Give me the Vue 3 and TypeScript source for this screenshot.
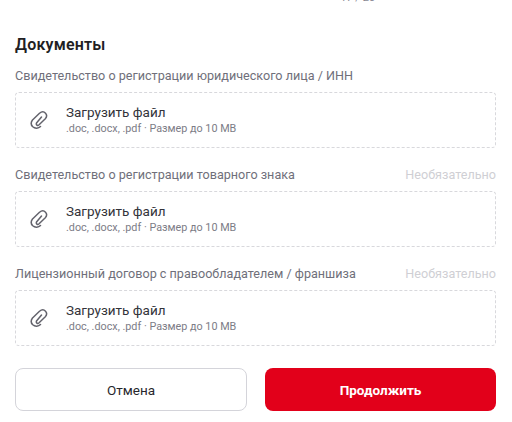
<script setup lang="ts">
interface Doc { label: string; optional: boolean }
const docs: Doc[] = [
  { label: 'Свидетельство о регистрации юридического лица / ИНН', optional: false },
  { label: 'Свидетельство о регистрации товарного знака', optional: true },
  { label: 'Лицензионный договор с правообладателем / франшиза', optional: true },
]
</script>

<template>
  <div class="page">
    <div class="counter">17 / 25</div>
    <h2 class="title">Документы</h2>
    <div class="docs">
      <div v-for="d in docs" :key="d.label" class="field">
        <div class="label-row">
          <span class="label">{{ d.label }}</span>
          <span v-if="d.optional" class="optional">Необязательно</span>
        </div>
        <div class="drop">
          <svg class="clip" width="20" height="20" viewBox="0 0 20 20" fill="none">
            <path d="M11.500 16.500C9.500 18.500 6 18.800 3.800 16.800C1.800 14.800 2 12 3.500 10L10.500 3.300C12.500 1.600 15 1.600 16.500 3.200C18 4.800 17.800 7 16.300 8.800L9.800 15C8.500 16 6.800 14.800 7.500 13L12.500 7" stroke="#63636c" stroke-width="1.500" stroke-linecap="round" stroke-linejoin="round"/>
          </svg>
          <div class="drop-text">
            <div class="drop-title">Загрузить файл</div>
            <div class="drop-hint">.doc, .docx, .pdf · Размер до 10 MB</div>
          </div>
        </div>
      </div>
    </div>
    <div class="actions">
      <button class="btn cancel" type="button">Отмена</button>
      <button class="btn next" type="button">Продолжить</button>
    </div>
  </div>
</template>

<style>
html, body { margin: 0; background: #fff; overflow: hidden; }
</style>

<style scoped>
.page {
  width: 512px;
  height: 422px;
  box-sizing: border-box;
  padding: 0 16px 0 15px;
  font-family: Roboto, sans-serif;
  color: #1f1f24;
  overflow: hidden;
}
.counter {
  height: 4px;
  line-height: 4px;
  margin-top: -4px;
  text-align: right;
  padding-right: 121px;
  font-size: 11px;
  color: #8a8a94;
}
.title {
  margin: 33px 0 0;
  font-size: 16px;
  line-height: 24px;
  font-weight: 600;
  letter-spacing: 0.2px;
}
.docs {
  margin-top: 11px;
  display: flex;
  flex-direction: column;
  gap: 19px;
}
.label-row {
  display: flex;
  justify-content: space-between;
  font-size: 12.600px;
  line-height: 16px;
  height: 16px;
  margin-bottom: 8px;
}
.label { color: #6f6f7a; }
.optional { color: #cfcfd4; }
.drop {
  box-sizing: border-box;
  height: 56px;
  border: 1px dashed #d8d8dc;
  border-radius: 4px;
  display: flex;
  align-items: center;
  padding-left: 13px;
}
.clip { flex: none; }
.drop-text { margin-left: 17px; margin-top: -2px; }
.drop-title { font-size: 13.500px; line-height: 16px; color: #33333a; margin-bottom: 2px; }
.drop-hint { font-size: 10.800px; line-height: 13px; color: #7c7c86; }
.actions {
  margin-top: 22px;
  display: grid;
  grid-template-columns: 232px 231px;
  gap: 18px;
}
.btn {
  height: 43px;
  border-radius: 8px;
  font-family: inherit;
  font-size: 13.500px;
  cursor: pointer;
}
.cancel { background: #fff; border: 1px solid #d4d4da; color: #27272c; }
.next { background: #e2001a; border: none; color: #fff; font-weight: 700; }
</style>
